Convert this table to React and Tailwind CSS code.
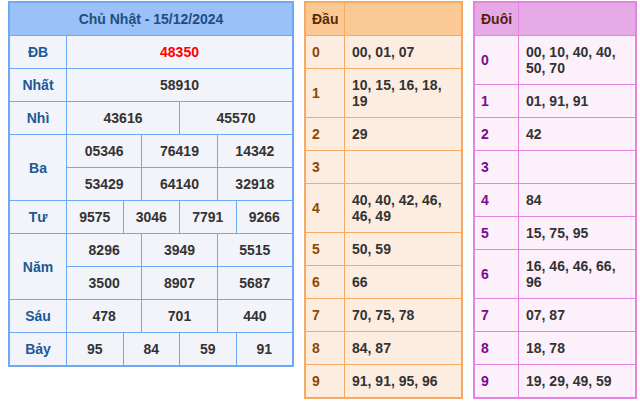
import React from "react";

const giai = [
  { label: "ĐB", rows: [["48350"]], red: true },
  { label: "Nhất", rows: [["58910"]] },
  { label: "Nhì", rows: [["43616", "45570"]] },
  { label: "Ba", rows: [["05346", "76419", "14342"], ["53429", "64140", "32918"]] },
  { label: "Tư", rows: [["9575", "3046", "7791", "9266"]] },
  { label: "Năm", rows: [["8296", "3949", "5515"], ["3500", "8907", "5687"]] },
  { label: "Sáu", rows: [["478", "701", "440"]] },
  { label: "Bảy", rows: [["95", "84", "59", "91"]] },
];

const spanClass = {
  1: "col-span-12",
  2: "col-span-6",
  3: "col-span-4",
  4: "col-span-3",
};

const rowSpanClass = {
  1: "row-span-1",
  2: "row-span-2",
};

const dau = [
  "00, 01, 07",
  "10, 15, 16, 18, 19",
  "29",
  "",
  "40, 40, 42, 46, 46, 49",
  "50, 59",
  "66",
  "70, 75, 78",
  "84, 87",
  "91, 91, 95, 96",
];

const duoi = [
  "00, 10, 40, 40, 50, 70",
  "01, 91, 91",
  "42",
  "",
  "84",
  "15, 75, 95",
  "16, 46, 46, 66, 96",
  "07, 87",
  "18, 78",
  "19, 29, 49, 59",
];

const KetQua = () => {
  return (
    <div className="w-[286px] border-2 border-[#6fa8f4] bg-[#6fa8f4] grid grid-cols-[56px_repeat(12,minmax(0,1fr))] auto-rows-[32px] gap-px text-[14px] leading-4 font-bold">
      <div className="col-span-13 bg-[#9ac1f8] text-[#1f4f7e] flex items-center justify-center">
        Chủ Nhật - 15/12/2024
      </div>
      {giai.map((g) => (
        <React.Fragment key={g.label}>
          <div
            className={`${rowSpanClass[g.rows.length]} bg-[#f3f4f9] text-[#1b5a96] flex items-center justify-center`}
          >
            {g.label}
          </div>
          {g.rows.map((row, ri) =>
            row.map((num, ci) => (
              <div
                key={`${ri}-${ci}`}
                className={`${spanClass[row.length]} bg-[#f3f4f9] flex items-center justify-center ${
                  g.red ? "text-[#ff0000]" : "text-[#333333]"
                }`}
              >
                {num}
              </div>
            ))
          )}
        </React.Fragment>
      ))}
    </div>
  );
};

const LoTo = ({ title, data, theme }) => {
  return (
    <div
      className={`border-2 grid gap-px text-[14px] leading-4 font-bold ${theme.wrap}`}
    >
      <div className={`py-2 pl-[6px] ${theme.head} ${theme.headText}`}>{title}</div>
      <div className={theme.head}></div>
      {data.map((val, i) => (
        <React.Fragment key={i}>
          <div className={`py-2 pl-[6px] flex items-center ${theme.cell} ${theme.labelText}`}>
            {i}
          </div>
          <div className={`py-2 pl-[7px] pr-[7px] text-[#333333] ${theme.cell}`}>{val}</div>
        </React.Fragment>
      ))}
    </div>
  );
};

const orange = {
  wrap: "w-[159px] border-[#f8aa63] bg-[#f8aa63] grid-cols-[38px_minmax(0,1fr)]",
  head: "bg-[#fbc996]",
  headText: "text-[#5a2c04]",
  cell: "bg-[#fdede0]",
  labelText: "text-[#8a4a04]",
};

const purple = {
  wrap: "w-[164px] border-[#e683e2] bg-[#e683e2] grid-cols-[43px_minmax(0,1fr)]",
  head: "bg-[#e5aae6]",
  headText: "text-[#5a1d10]",
  cell: "bg-[#fcf0fb]",
  labelText: "text-[#7a0c8c]",
};

export default function App() {
  return (
    <div
      className="w-[640px] h-[403px] bg-white pl-[8px] pt-px flex items-start gap-[10px]"
      style={{ fontFamily: '"Liberation Sans", Arial, sans-serif' }}
    >
      <KetQua />
      <LoTo title="Đầu" data={dau} theme={orange} />
      <LoTo title="Đuôi" data={duoi} theme={purple} />
    </div>
  );
}
